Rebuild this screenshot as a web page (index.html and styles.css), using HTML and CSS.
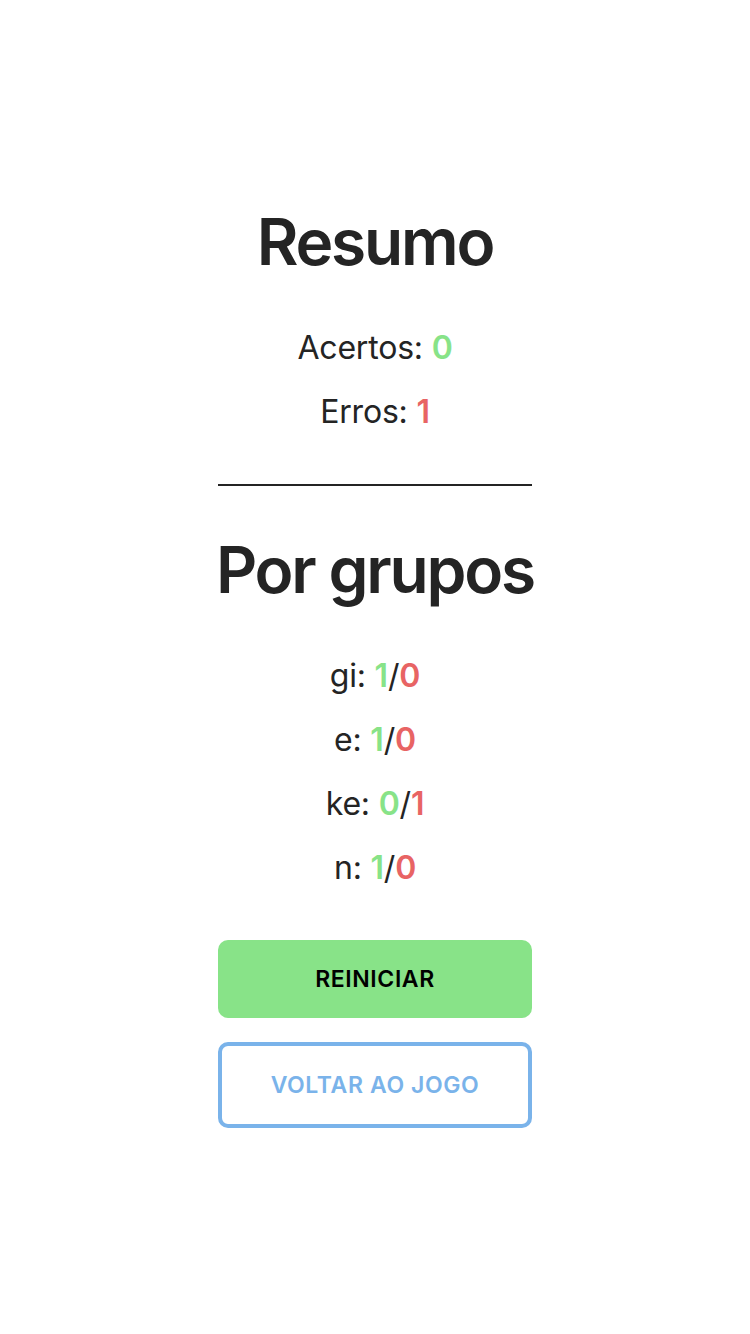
FILE: index.html
```html
<!DOCTYPE html>
<html lang="pt">
<head>
<meta charset="utf-8">
<title>Resumo</title>
<link rel="stylesheet" href="styles.css">
</head>
<body>
<main class="summary">
  <h1 class="title">Resumo</h1>
  <div class="stats">
    <p class="stat">Acertos: <span class="ok">0</span></p>
    <p class="stat">Erros: <span class="bad">1</span></p>
  </div>
  <hr class="divider">
  <h2 class="title title-groups">Por grupos</h2>
  <div class="stats">
    <p class="stat">gi: <span class="ok">1</span>/<span class="bad">0</span></p>
    <p class="stat">e: <span class="ok">1</span>/<span class="bad">0</span></p>
    <p class="stat">ke: <span class="ok">0</span>/<span class="bad">1</span></p>
    <p class="stat">n: <span class="ok">1</span>/<span class="bad">0</span></p>
  </div>
  <div class="actions">
    <button class="btn btn-primary" type="button">REINICIAR</button>
    <button class="btn btn-outline" type="button">VOLTAR AO JOGO</button>
  </div>
</main>
</body>
</html>
```
FILE: styles.css
```css
html, body {
  margin: 0;
  padding: 0;
  background: #ffffff;
}

body {
  font-family: Inter, "Noto Sans", "Liberation Sans", sans-serif;
  color: #242424;
}

.summary {
  width: 314px;
  margin: 0 auto;
  padding-top: 203px;
  display: flex;
  flex-direction: column;
  align-items: stretch;
  text-align: center;
}

.title {
  margin: 0 -20px;
  font-size: 64px;
  line-height: 77px;
  font-weight: 600;
  letter-spacing: -2.2px;
  white-space: nowrap;
  color: #242424;
}

.title-groups {
  margin-top: 45px;
}

.stats {
  display: flex;
  flex-direction: column;
  gap: 16px;
  margin-top: 44px;
}

.stat {
  margin: 0;
  font-size: 32px;
  line-height: 48px;
  font-weight: 400;
  letter-spacing: -0.2px;
}

.ok {
  color: #88e388;
  font-weight: 600;
}

.bad {
  color: #e86464;
  font-weight: 600;
}

.divider {
  margin: 48px 0 0;
  border: 0;
  height: 2px;
  background: #242424;
}

.actions {
  display: flex;
  flex-direction: column;
  gap: 24px;
  margin-top: 48px;
}

.btn {
  font-family: Inter, "Noto Sans", "Liberation Sans", sans-serif;
  font-size: 23px;
  font-weight: 600;
  letter-spacing: 0.6px;
  border-radius: 10px;
  cursor: pointer;
  width: 100%;
}

.btn-primary {
  height: 78px;
  background: #88e388;
  color: #000000;
  border: 0;
}

.btn-outline {
  height: 86px;
  background: #ffffff;
  color: #7ab3ea;
  border: 4px solid #7ab3ea;
}
```
